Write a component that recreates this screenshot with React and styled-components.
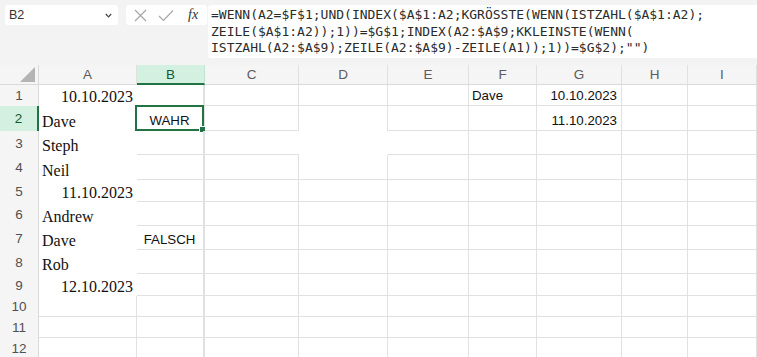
import React from 'react';
import styled, { createGlobalStyle } from 'styled-components';

const GlobalStyle = createGlobalStyle`
  html, body {
    margin: 0;
    padding: 0;
    background: #f3f3f3;
    overflow: hidden;
  }
`;

const COLS = [
  { key: 'A', width: 98 },
  { key: 'B', width: 68 },
  { key: 'C', width: 94 },
  { key: 'D', width: 89 },
  { key: 'E', width: 81 },
  { key: 'F', width: 68 },
  { key: 'G', width: 85 },
  { key: 'H', width: 66 },
  { key: 'I', width: 69 },
];

const ROW_HEIGHTS = [21, 25, 24, 25, 22, 24, 24, 24, 22, 21, 21, 21];

const DATA = {
  A1: { v: '10.10.2023', font: 'serif', align: 'right' },
  A2: { v: 'Dave', font: 'serif' },
  A3: { v: 'Steph', font: 'serif' },
  A4: { v: 'Neil', font: 'serif' },
  A5: { v: '11.10.2023', font: 'serif', align: 'right' },
  A6: { v: 'Andrew', font: 'serif' },
  A7: { v: 'Dave', font: 'serif' },
  A8: { v: 'Rob', font: 'serif' },
  A9: { v: '12.10.2023', font: 'serif', align: 'right' },
  B2: { v: 'WAHR', align: 'center' },
  B7: { v: 'FALSCH', align: 'center' },
  F1: { v: 'Dave' },
  G1: { v: '10.10.2023', align: 'right' },
  G2: { v: '11.10.2023', align: 'right' },
};

const FORMULA = [
  '=WENN(A2=$F$1;UND(INDEX($A$1:A2;KGRÖSSTE(WENN(ISTZAHL($A$1:A2);',
  'ZEILE($A$1:A2));1))=$G$1;INDEX(A2:$A$9;KKLEINSTE(WENN(',
  'ISTZAHL(A2:$A$9);ZEILE(A2:$A$9)-ZEILE(A1));1))=$G$2);"")',
];

// white-filled cells hide their gridlines
const filled = (col, row) => (col === 'A' && row <= 9) || (col === 'D' && row === 3);

const Page = styled.div`
  width: 757px;
  height: 357px;
  display: flex;
  flex-direction: column;
  overflow: hidden;
`;

const Toolbar = styled.div`
  display: flex;
  align-items: flex-start;
  padding: 5px 0 7px 5px;
  height: 53px;
  border-top: 2px solid #e9e9e9;
  margin-top: -2px;
`;

const NameBox = styled.div`
  width: 113px;
  height: 20px;
  background: #fff;
  border-radius: 3px;
  display: flex;
  align-items: center;
  justify-content: space-between;
  padding: 0 6px 0 4px;
  box-sizing: border-box;
  font-family: 'Liberation Sans', Arial, sans-serif;
  font-size: 12.5px;
  color: #333;
`;

const IconBox = styled.div`
  width: 81px;
  height: 20px;
  margin-left: 8px;
  background: #fff;
  border-radius: 3px;
  display: flex;
  align-items: center;
  padding: 0 6px 0 8px;
  box-sizing: border-box;
  gap: 11px;
`;

const Fx = styled.span`
  font-family: 'Liberation Serif', 'Times New Roman', serif;
  font-style: italic;
  font-size: 14px;
  color: #333;
  margin-left: 3px;
`;

const FormulaBox = styled.div`
  flex: 1;
  height: 53px;
  margin-left: 1px;
  background: #fff;
  border-radius: 3px 0 0 3px;
  padding: 2px 0 0 3px;
  box-sizing: border-box;
  font-family: 'DejaVu Sans Mono', 'Liberation Mono', monospace;
  font-size: 13px;
  line-height: 16.5px;
  color: #2b2b2b;
  white-space: pre;
`;

const Sheet = styled.div`
  display: grid;
  grid-template-columns: 39px ${COLS.map((c) => `${c.width}px`).join(' ')};
  grid-template-rows: 20px ${ROW_HEIGHTS.map((h) => `${h}px`).join(' ')};
  background: #fff;
  flex: 1;
  overflow: hidden;
`;

const Corner = styled.div`
  background: #f5f5f5;
  border-right: 1px solid #dadada;
  border-bottom: 1px solid #dadada;
  position: relative;
  &::after {
    content: '';
    position: absolute;
    right: 3px;
    bottom: 2px;
    width: 0;
    height: 0;
    border-left: 15px solid transparent;
    border-bottom: 15px solid #b4b4b4;
  }
`;

const ColHeader = styled.div`
  background: ${(p) => (p.$active ? '#d3f0e0' : '#f5f5f5')};
  color: ${(p) => (p.$active ? '#0f5c33' : '#5c5c5c')};
  border-right: 1px solid ${(p) => (p.$active ? '#c3e3d1' : '#e0e0e0')};
  border-bottom: ${(p) => (p.$active ? '2px solid #217346' : '1px solid #dadada')};
  display: flex;
  align-items: center;
  justify-content: center;
  font-family: 'Liberation Sans', Arial, sans-serif;
  font-size: 13.5px;
  box-sizing: border-box;
`;

const RowHeader = styled.div`
  background: ${(p) => (p.$active ? '#d3f0e0' : '#f5f5f5')};
  color: ${(p) => (p.$active ? '#0f5c33' : '#505050')};
  border-right: ${(p) => (p.$active ? '2px solid #217346' : '1px solid #dadada')};
  display: flex;
  align-items: center;
  justify-content: center;
  font-family: 'Liberation Sans', Arial, sans-serif;
  font-size: 13.5px;
  box-sizing: border-box;
`;

const Cell = styled.div`
  position: relative;
  box-sizing: border-box;
  border-right: ${(p) => (p.$noRight ? '0' : `${p.$thick ? 2 : 1}px solid #e1e1e1`)};
  border-bottom: ${(p) => (p.$noBottom ? '0' : '1px solid #e1e1e1')};
  display: flex;
  align-items: flex-end;
  justify-content: ${(p) =>
    p.$align === 'right' ? 'flex-end' : p.$align === 'center' ? 'center' : 'flex-start'};
  padding: ${(p) => (p.$font === 'serif' ? '0 4px 1px 3px' : '0 4px 2px 3px')};
  font-family: ${(p) =>
    p.$font === 'serif'
      ? "'Liberation Serif', 'Times New Roman', serif"
      : "'Liberation Sans', Arial, sans-serif"};
  font-size: ${(p) => (p.$font === 'serif' ? '16px' : '13.3px')};
  line-height: ${(p) => (p.$font === 'serif' ? '16px' : '14px')};
  color: #111;
  white-space: nowrap;
`;

const Selection = styled.div`
  position: absolute;
  left: -2px;
  top: -1px;
  right: -1px;
  bottom: -1px;
  border: 2px solid #217346;
  pointer-events: none;
  &::after {
    content: '';
    position: absolute;
    right: -4px;
    bottom: -4px;
    width: 5px;
    height: 5px;
    background: #217346;
    border: 1px solid #fff;
  }
`;

const CancelIcon = () => (
  <svg width="13" height="13" viewBox="0 0 13 13">
    <path d="M1 1 L12 12 M12 1 L1 12" stroke="#a6a6a6" strokeWidth="1.2" fill="none" />
  </svg>
);

const CheckIcon = () => (
  <svg width="16" height="13" viewBox="0 0 16 13">
    <path d="M1 7 L5.5 11.5 L15 1.5" stroke="#a6a6a6" strokeWidth="1.2" fill="none" />
  </svg>
);

const Chevron = () => (
  <svg width="7" height="5" viewBox="0 0 7 5">
    <path d="M0.8 1 L3.5 3.8 L6.2 1" stroke="#444" strokeWidth="1.2" fill="none" />
  </svg>
);

const App = () => {
  const rows = ROW_HEIGHTS.map((_, i) => i + 1);
  return (
    <Page>
      <GlobalStyle />
      <Toolbar>
        <NameBox>
          B2
          <Chevron />
        </NameBox>
        <IconBox>
          <CancelIcon />
          <CheckIcon />
          <Fx>fx</Fx>
        </IconBox>
        <FormulaBox>{FORMULA.join('\n')}</FormulaBox>
      </Toolbar>
      <Sheet>
        <Corner />
        {COLS.map((c) => (
          <ColHeader key={c.key} $active={c.key === 'B'}>
            {c.key}
          </ColHeader>
        ))}
        {rows.map((r) => (
          <React.Fragment key={r}>
            <RowHeader $active={r === 2}>{r}</RowHeader>
            {COLS.map((c, ci) => {
              const id = `${c.key}${r}`;
              const d = DATA[id] || {};
              const next = COLS[ci + 1];
              const noRight = filled(c.key, r) || (next && filled(next.key, r));
              const noBottom = filled(c.key, r) || filled(c.key, r + 1);
              return (
                <Cell
                  key={id}
                  $align={d.align}
                  $font={d.font}
                  $noRight={noRight}
                  $noBottom={noBottom}
                  $thick={c.key === 'B'}
                >
                  {d.v}
                  {id === 'B2' && <Selection />}
                </Cell>
              );
            })}
          </React.Fragment>
        ))}
      </Sheet>
    </Page>
  );
};

export default App;
